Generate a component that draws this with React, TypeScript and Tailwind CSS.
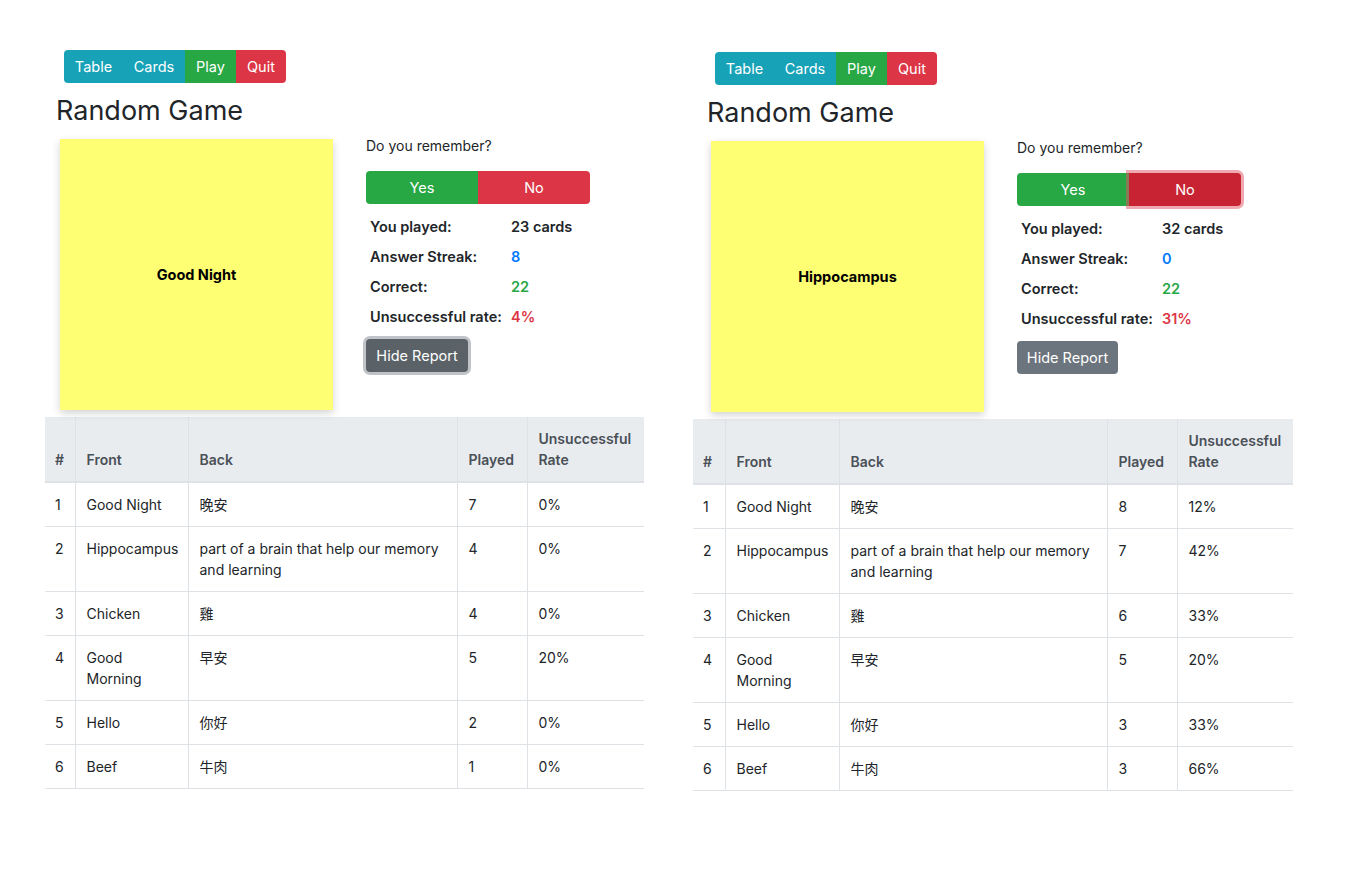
import React from "react";

type Row = { n: number; front: string; back: string; played: number; rate: string };

type PanelData = {
  word: string;
  played: number;
  streak: number;
  correct: number;
  rate: string;
  noFocused: boolean;
  hideFocused: boolean;
  rows: Row[];
};

const FONT = { fontFamily: "Inter, 'Noto Sans CJK TC', sans-serif" };

const left: PanelData = {
  word: "Good Night",
  played: 23,
  streak: 8,
  correct: 22,
  rate: "4%",
  noFocused: false,
  hideFocused: true,
  rows: [
    { n: 1, front: "Good Night", back: "晚安", played: 7, rate: "0%" },
    { n: 2, front: "Hippocampus", back: "part of a brain that help our memory and learning", played: 4, rate: "0%" },
    { n: 3, front: "Chicken", back: "雞", played: 4, rate: "0%" },
    { n: 4, front: "Good Morning", back: "早安", played: 5, rate: "20%" },
    { n: 5, front: "Hello", back: "你好", played: 2, rate: "0%" },
    { n: 6, front: "Beef", back: "牛肉", played: 1, rate: "0%" },
  ],
};

const right: PanelData = {
  word: "Hippocampus",
  played: 32,
  streak: 0,
  correct: 22,
  rate: "31%",
  noFocused: true,
  hideFocused: false,
  rows: [
    { n: 1, front: "Good Night", back: "晚安", played: 8, rate: "12%" },
    { n: 2, front: "Hippocampus", back: "part of a brain that help our memory and learning", played: 7, rate: "42%" },
    { n: 3, front: "Chicken", back: "雞", played: 6, rate: "33%" },
    { n: 4, front: "Good Morning", back: "早安", played: 5, rate: "20%" },
    { n: 5, front: "Hello", back: "你好", played: 3, rate: "33%" },
    { n: 6, front: "Beef", back: "牛肉", played: 3, rate: "66%" },
  ],
};

function LeftCols() {
  return (
    <colgroup>
      <col className="w-[30px]" />
      <col className="w-[113px]" />
      <col className="w-[269px]" />
      <col className="w-[70px]" />
      <col className="w-[117px]" />
    </colgroup>
  );
}

function RightCols() {
  return (
    <colgroup>
      <col className="w-[32px]" />
      <col className="w-[114px]" />
      <col className="w-[268px]" />
      <col className="w-[70px]" />
      <col className="w-[116px]" />
    </colgroup>
  );
}

function Panel({ d, isRight }: { d: PanelData; isRight?: boolean }) {
  return (
    <div className={isRight ? "mt-[2px] w-[600px] shrink-0" : "w-[599px] shrink-0"}>
      <div className={isRight ? "ml-[3px]" : ""}>
        {/* nav buttons */}
        <div className="ml-[19px] flex h-[33px] text-[14.5px] text-white">
          <button className="flex w-[59px] items-center justify-center rounded-l-[4px] bg-[#17a2b8]">Table</button>
          <button className="flex w-[62px] items-center justify-center bg-[#17a2b8]">Cards</button>
          <button className="flex w-[51px] items-center justify-center bg-[#28a745]">Play</button>
          <button className="flex w-[50px] items-center justify-center rounded-r-[4px] bg-[#dc3545]">Quit</button>
        </div>
        <h2 className="ml-[11px] mt-[11px] h-[34px] text-[27px] font-normal leading-[34px] text-[#212529]">Random Game</h2>
        <div className="mt-[11px] flex">
          <div className="ml-[15px] flex h-[271px] w-[273px] items-center justify-center bg-[#ffff73] text-[14.5px] font-bold text-black shadow-[0_3px_8px_rgba(0,0,0,0.18)]">
            {d.word}
          </div>
          <div className="ml-[33px] flex flex-col">
            <div className="mt-[-3px] h-[20px] text-[14px] leading-[20px] text-[#212529]">Do you remember?</div>
            <div className="mt-[15px] flex h-[33px] text-[14.5px] text-white">
              <button className="flex w-[112px] items-center justify-center rounded-l-[4px] bg-[#28a745]">Yes</button>
              {d.noFocused ? (
                <button className="flex w-[112px] items-center justify-center rounded-r-[4px] bg-[#c82333] shadow-[0_0_0_3px_rgba(225,83,97,0.5)]">No</button>
              ) : (
                <button className="flex w-[112px] items-center justify-center rounded-r-[4px] bg-[#dc3545]">No</button>
              )}
            </div>
            <div className="mt-[8px] flex flex-col whitespace-nowrap pl-[4px] text-[14.5px] font-semibold text-[#212529]">
              <div className="flex h-[30px] items-center">
                <span className="w-[141px] shrink-0">You played:</span>
                <span>{d.played} cards</span>
              </div>
              <div className="flex h-[30px] items-center">
                <span className="w-[141px] shrink-0">Answer Streak:</span>
                <span className="text-[#007bff]">{d.streak}</span>
              </div>
              <div className="flex h-[30px] items-center">
                <span className="w-[141px] shrink-0">Correct:</span>
                <span className="text-[#28a745]">{d.correct}</span>
              </div>
              <div className="flex h-[30px] items-center">
                <span className="w-[141px] shrink-0">Unsuccessful rate:</span>
                <span className="text-[#dc3545]">{d.rate}</span>
              </div>
            </div>
            <div className="mt-[7px]">
              {d.hideFocused ? (
                <button className="flex h-[33px] w-[102px] items-center justify-center rounded-[4px] bg-[#5a6268] text-[14.5px] text-white shadow-[0_0_0_3px_rgba(130,138,145,0.5)]">
                  Hide Report
                </button>
              ) : (
                <button className="flex h-[33px] w-[101px] items-center justify-center rounded-[4px] bg-[#6c757d] text-[14.5px] text-white">
                  Hide Report
                </button>
              )}
            </div>
          </div>
        </div>
      </div>
      <table className="mt-[7px] w-full table-fixed border-collapse text-[14px] leading-[21px] text-[#212529]">
        {isRight ? <RightCols /> : <LeftCols />}
        <thead>
          <tr className="border-b-2 border-[#dee2e6] bg-[#e9ecef] text-left align-bottom text-[#495057]">
            <th className="px-[10px] py-[11px] font-semibold">#</th>
            <th className="border-l border-[#dee2e6] px-[11px] py-[11px] font-semibold">Front</th>
            <th className="border-l border-[#dee2e6] px-[11px] py-[11px] font-semibold">Back</th>
            <th className="border-l border-[#dee2e6] px-[11px] py-[11px] font-semibold">Played</th>
            <th className="border-l border-[#dee2e6] px-[11px] py-[11px] font-semibold">Unsuccessful Rate</th>
          </tr>
        </thead>
        <tbody>
          {d.rows.map((r) => (
            <tr key={r.n} className="border-b border-[#dee2e6] align-top">
              <td className="px-[10px] py-[11px]">{r.n}</td>
              <td className="border-l border-[#dee2e6] px-[11px] py-[11px]">{r.front}</td>
              <td className="border-l border-[#dee2e6] px-[11px] py-[11px]">{r.back}</td>
              <td className="border-l border-[#dee2e6] px-[11px] py-[11px]">{r.played}</td>
              <td className="border-l border-[#dee2e6] px-[11px] py-[11px]">{r.rate}</td>
            </tr>
          ))}
        </tbody>
      </table>
    </div>
  );
}

export default function App() {
  return (
    <div className="min-h-[884px] w-[1350px] bg-white" style={FONT}>
      <div className="flex gap-[49px] pl-[45px] pt-[50px]">
        <Panel d={left} />
        <Panel d={right} isRight />
      </div>
    </div>
  );
}
